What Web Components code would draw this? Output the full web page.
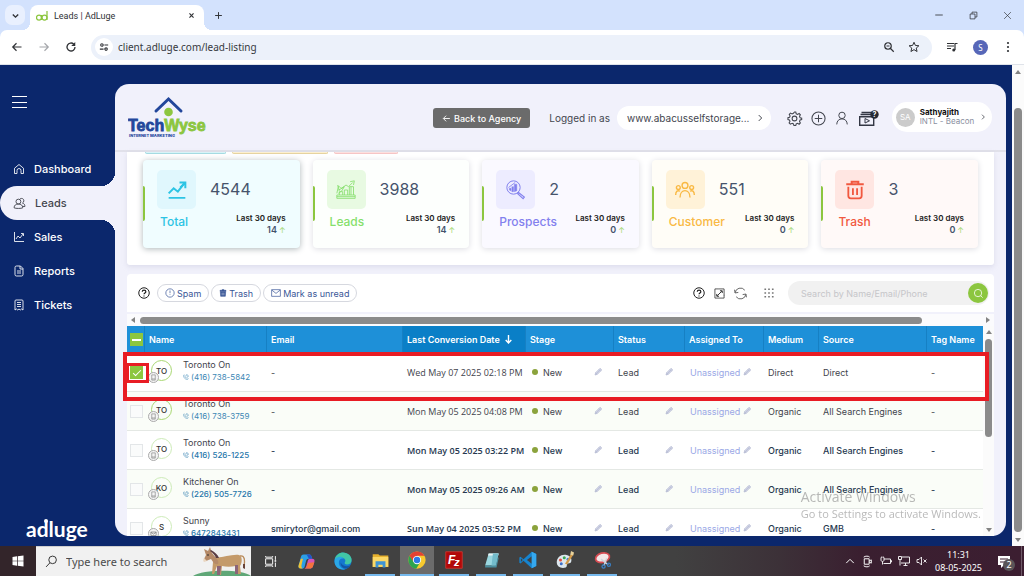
<!DOCTYPE html>
<html lang="en">
<head>
<meta charset="utf-8">
<title>Leads | AdLuge</title>
<style>
html, body { margin: 0; height: 100%; }
body {
  min-height: 100vh; display: flex; flex-direction: column; overflow: hidden;
  font-family: Inter, "Liberation Sans", sans-serif; font-size: 9px; color: #40444e;
  --navy: #0b276c; --panel: #f1f1fb; --green: #8cc63f; --sys: "Noto Sans", "Open Sans", sans-serif;
}
</style>
</head>
<body>
<browser-bar></browser-bar>
<lead-app></lead-app>
<task-bar></task-bar>
<activation-note></activation-note>

<script>
const ICONS = {
  down: '<path d="M7 10l5 5 5-5" stroke-width="2.6"/>',
  close: '<path d="M5 5l14 14M19 5L5 19" stroke-width="4"/>',
  thinclose: '<path d="M3 3l18 18M21 3L3 21" stroke-width="1.8"/>',
  plus: '<path d="M12 3v18M3 12h18" stroke-width="2.6"/>',
  minus: '<path d="M3 12h18" stroke-width="2"/>',
  restore: '<path d="M3 8h13v13H3zM8 8V3h13v13h-5" stroke-width="2"/>',
  back: '<path d="M21 12H4M11 4.5L3.500 12l7.500 7.500" stroke-width="2.4"/>',
  forward: '<path d="M3 12h17M13 4.500l7.500 7.500-7.500 7.500" stroke-width="2.400"/>',
  reload: '<path d="M20 12a8 8 0 1 1-2.500-5.800" stroke-width="2.600"/><path d="M20.500 2v8h-8z" fill="currentColor" stroke="none"/>',
  tune: '<circle cx="7" cy="7" r="3" stroke-width="2.600"/><circle cx="17" cy="17" r="3" stroke-width="2.600"/><path d="M13 7h9M2 17h9" stroke-width="2.600"/>',
  zoomout: '<circle cx="10" cy="10" r="6.500" stroke-width="2.400"/><path d="M15 15l6.500 6.500M7 10h6" stroke-width="2.400"/>',
  star: '<path d="M12 2.500l2.800 6.400 7 .6-5.300 4.600 1.600 6.900L12 17.300 5.900 21l1.600-6.900-5.300-4.600 7-.6z" stroke-width="2"/>',
  media: '<path d="M2 5h14M2 10h14M2 15h8" stroke-width="2.400"/><path d="M18 18V5h5" stroke-width="2.400"/><circle cx="15.500" cy="18" r="3" fill="currentColor" stroke="none"/>',
  dots: '<g fill="currentColor" stroke="none"><circle cx="12" cy="4" r="2.200"/><circle cx="12" cy="12" r="2.200"/><circle cx="12" cy="20" r="2.200"/></g>',
  home: '<path d="M3 10.500L12 3l9 7.500V21h-5v-6a4 4 0 0 0-8 0v6H3z"/>',
  people: '<circle cx="10" cy="8.500" r="4.500"/><path d="M2 20c0-5 3.500-7 8-7s8 2 8 7c-3 1.500-13 1.500-16 0zM12 4.500C14 1.500 20 2 20 7c0 2-1 3.500-2.500 4.200 3 .8 4.500 3 4.500 6.300h-4"/>',
  chart: '<path d="M3 2v19h19M6 16l4-6 4 4 6-8M16 5h5v5"/>',
  report: '<path d="M4 5a3 3 0 0 1 3-3h8l5 5v12a3 3 0 0 1-3 3H7a3 3 0 0 1-3-3zM14 2v6h6M8 12h8M8 16h8"/>',
  ticket: '<path d="M4 22V4a2 2 0 0 1 2-2h12a2 2 0 0 1 2 2v18l-3-2-2.500 2L12 20l-2.500 2L7 20zM8 7h8M8 11h8M8 15h8"/>',
  gear: '<circle cx="12" cy="12" r="3.800"/><path d="M12 1.500l2 .2.700 2.700 2.200 1 2.500-1.400 2 2-1.400 2.500 1 2.200 2.500.7v2.400l-2.600.7-.9 2.200 1.400 2.500-2 2-2.500-1.400-2.200 1-.7 2.500h-2.900l-.7-2.500-2.200-1L5.400 21l-2-2 1.400-2.500-1-2.200L1.500 13.600v-2.800l2.600-.7.900-2.200L3.600 5.300l2-2 2.500 1.400 2.200-1z"/>',
  addcircle: '<circle cx="12" cy="12" r="10.500"/><path d="M12 6v12M6 12h12"/>',
  user: '<circle cx="12" cy="7.500" r="5.500"/><path d="M3 23c0-6 4-9.500 9-9.500s9 3.500 9 9.500"/>',
  right: '<path d="M9 5l7 7-7 7" stroke-width="2.400"/>',
  help: '<circle cx="12" cy="12" r="10.500" stroke-width="2"/><path d="M8.500 9.500c.2-4.500 7.200-4.300 7.200 0 0 2.500-3.600 2.500-3.600 5M12 17v2.200" stroke-width="2.400"/>',
  spam: '<circle cx="12" cy="12" r="10"/><path d="M12 6v6M12 14v2"/>',
  trashfill: '<path d="M4 8h16l-1 14H5zM3 4h18v3H3zM9 2h6v2H9z" fill="currentColor"/><path d="M9 11v8M12 11v8M15 11v8" stroke="#fff" stroke-width="1"/>',
  mail: '<path d="M1.500 4h21v16h-21zM2 5l10 8 10-8"/>',
  expand: '<path d="M9 2H2v20h20v-7M22 2H9M22 2v14" stroke-width="1.600"/><path d="M17 7L7 17M13 6h5v5M6 13v5h5" stroke-width="2"/>',
  refresh: '<path d="M2 11a10 10 0 0 1 18-5M22 13a10 10 0 0 1-18 5M1 5l1 6 6-1M23 19l-1-6-6 1" stroke-width="1.800"/>',
  apps: '<g fill="currentColor" stroke="none"><path d="M1 1h4v4H1zM10 1h4v4h-4zM19 1h4v4h-4zM1 10h4v4H1zM10 10h4v4h-4zM19 10h4v4h-4zM1 19h4v4H1zM10 19h4v4h-4zM19 19h4v4h-4z"/></g>',
  search: '<circle cx="11" cy="11" r="8"/><path d="M17 17l4 4"/>',
  pencil: '<path d="M3 21l2-7L17 2c3-1 6 2 5 5L10 19z" fill="#d3d7e8" stroke="#aab1cc" stroke-width="2"/><path d="M5 14l5 5M15 5l5 5M8 16l9-9" stroke="#aab1cc" stroke-width="1.500"/>',
  phone: '<path d="M5 3L2 6c0 9 7 16 16 16l3-4-5-4-3 2c-2-1-4-3-5-5l2-3zM13 2c5 0 9 4 9 9M13 6c3 0 5 2 5 5" stroke-width="2"/>',
  mobile: '<path d="M6 3h12v18H6zM6 17h12" stroke-width="2"/>',
  mailopen: '<path d="M3 7h18v12H3zM3 8l9 6 9-6" stroke-width="2.400"/>',
  growth: '<path d="M2 21.500h20" stroke-width="2"/><path d="M2 16l6-6 5 4 7-9" stroke-width="2.400"/><path d="M15 3h7v7M16 9l5-5" stroke-width="2.400"/>',
  bars: '<g stroke-width="1"><path d="M1 22h22v-4H1zM4 18v-4h4v4M10 18v-6h4v6M16 18V8h5v10M1 16l2-9 3 3 4-2-3 5-4 3M8 9l4-3 3 2 5-5M17 2l5-1-1 5M2 6l2 7M3 12l6-3"/><path d="M1 20h22M18 8v10"/></g>',
  lens: '<circle cx="9" cy="9" r="8" stroke-width="1.200"/><path d="M15 15l7 5.500-1.500 2L14 16.500z" stroke-width="1.400"/><path d="M4 12v-2h2v3zM7 14V8h2v6zM10 14V5h3v8z" fill="currentColor" stroke-width=".5"/><path d="M3 9l8-6" stroke-width="1"/>',
  group: '<g stroke-width="1.700"><circle cx="12" cy="6.500" r="3.500"/><circle cx="4" cy="9" r="2.300"/><circle cx="20" cy="9" r="2.300"/><path d="M6 21c0-11 12-11 12 0M.8 18c0-5 2.500-6 5.200-4.500M23.200 18c0-5-2.500-6-5.200-4.500"/></g>',
  bin: '<path d="M1.500 5h21M8 5V2h8v3" stroke-width="2.400"/><path d="M4 8v11c0 2 1 3 3 3h10c2 0 3-1 3-3V8M9.500 10v8M14.500 10v8" stroke-width="2.200"/>',
  win: '<path d="M1 4l9-1.300V11.300H1zM11.500 2.500L23 1v10.300H11.500zM1 12.700h9v8.600L1 20zM11.500 12.700H23V23l-11.500-1.500z" fill="currentColor" stroke="none"/>',
  find: '<circle cx="14" cy="9" r="7" stroke-width="1.800"/><path d="M9 14.500L2 22" stroke-width="1.800"/>',
  taskview: '<path d="M3 7h13v10H3zM3 2v2h13V2M3 22v-2h13v2M21 2v7M21 14v8" stroke-width="1.800"/><path d="M19.500 9.500h3v3h-3z" fill="currentColor" stroke="none"/>',
  caretup: '<path d="M3 17l9-9 9 9" stroke-width="2.400"/>',
  meet: '<path d="M6 7h9v10H6zM15 11l4-2v6l-4-2M5 4c3-2.500 9-2.500 11 0M5 20c3 2.500 9 2.500 11 0" stroke-width="1.800"/>',
  battery: '<path d="M8 8h13v9H7M21 11h2v3h-2M2 5v5c0 4 6 4 6 0V5M3.500 3v3M6.500 3v3M5 13v6" stroke-width="1.800"/>',
  network: '<path d="M8 4h15v12H6M11 21h8M15 16v5M1 3h6v6H1zM4 9v12" stroke-width="1.800"/>',
  mute: '<path d="M2 9h4l5-5v16l-5-5H2zM15 9l6 6M21 9l-6 6" stroke-width="1.700"/>',
  copilot: '<g stroke="none"><path d="M8 2h8c2 0 2.500 1 3 3l1 3h-5c-2 0-3 1-3.600 3l-2 8c-.6 2-1.400 3-3.400 3H4c-3 0-4-2-3-5l3-11c.7-3 2-4 4-4z" fill="#2c9fe6"/><path d="M4 8l3 0-2 9c-.5 2 0 4 2 5H4c-3 0-4-2-3-5z" fill="#f2c230"/><path d="M16 22H8c2 0 3-1 3.600-3l2.600-9c.6-1.500 1.800-2 3.800-2h2c3 0 4 2 3 5l-2 6c-.8 2-2 3-5 3z" fill="#d453b8"/><path d="M14 14l9-1-2 6c-.8 2-2 3-5 3H9c3-1 4-4 5-8z" fill="#f5743c"/><path d="M11 2h5c2 0 2.500 1 3 3l1 3h-4c-2-1-2-5-5-6z" fill="#2553c8"/></g>',
  edge: '<g stroke="none"><circle cx="12" cy="12" r="11.500" fill="#1477d0"/><path d="M1 10C2 4 7 .5 12 .5c7 0 11.500 5 11.500 10 0 4-3 6-6 6-3 0-4-1.500-3-3 2-3-1-6-4-6C6 7.500 3 9 1 10z" fill="#41c6a6"/><path d="M1 10c3-4 9-5 12-1-4-1-7 2-6.500 6 .5 4 4 7.500 8.500 8C7 25-1 19 1 10z" fill="#2ba7e6"/><path d="M9 14c-1 4 3 8 7 8 2 0 5-2 6-4-5 2-11 1-13-4z" fill="#1356a5"/></g>',
  folder: '<g stroke="none"><path d="M1 3h8l2 2h12v16H1z" fill="#e6b02d"/><path d="M1 7h22v14H1z" fill="#fbd866"/><path d="M5 13h14v9h-4v-4H9v4H5z" fill="#3f94d4"/></g>',
  chrome: '<g stroke="none"><circle cx="12" cy="12" r="11.500" fill="#f7c92e"/><path d="M2 6.300C4 2.500 8 .5 12 .5s8 2 10 5.700H12L7 15z" fill="#e34133"/><path d="M2 6.300C-2 13 2.500 23 11 23.500L16.800 14H7z" fill="#2da44e"/><circle cx="12" cy="12" r="5.500" fill="#fff"/><circle cx="12" cy="12" r="4.300" fill="#2d79e6"/></g>',
  filezilla: '<path d="M1 1h22v22H1z" fill="#b20808" stroke="#d53a32" stroke-width="1"/><text x="4" y="17" font-family="Liberation Sans" font-size="16" font-style="italic" font-weight="700" fill="#fff" stroke="none">F</text><text x="12" y="20" font-family="Liberation Sans" font-size="15" font-style="italic" font-weight="700" fill="#fff" stroke="none">z</text>',
  notepad: '<g stroke="none"><path d="M8 2h14l-4 17H3z" fill="#9ad7e0"/><path d="M8 2h14l-.6 3H7z" fill="#e9f4f5"/><path d="M3 19h15l3-13 1 3-3 13H3z" fill="#4a8f9f"/><path d="M14 2h8l-4 17h-6z" fill="#73bccb"/></g>',
  vscode: '<g stroke="none"><path d="M17 1l6 3v16l-6 3L6 13 2 16.500.5 15.500v-7L2 7.500 6 11z" fill="#1684cf"/><path d="M17 7v10l-6.500-5z" fill="#414141"/><path d="M2.500 9.500v5L5 12z" fill="#414141"/><path d="M17 1l6 3v16l-6 3z" fill="#35a8ef"/></g>',
  paint: '<g stroke="none"><path d="M1 15C1 8 7 4 13 5c6 1 9 5 7 10-1 2-4 1-5 2-1 2 0 4-2 5-6 2-12-1-12-7z" fill="#dde7ee"/><circle cx="6" cy="12" r="2" fill="#e34d3b"/><circle cx="11" cy="9" r="2" fill="#39a652"/><circle cx="16" cy="11" r="2" fill="#3a7fd4"/><circle cx="7" cy="17" r="2" fill="#3d6fc9"/><path d="M12 17L20 4l3 1-8 13z" fill="#d39a4a"/><path d="M19 5l1-5 4 2-1 4z" fill="#e9d29a"/></g>',
  snip: '<ellipse cx="12" cy="8" rx="10" ry="6.500" fill="#f3e6e7" stroke="#d64b52" stroke-width="2.500" transform="rotate(-15 12 8)"/><path d="M10 10l10 8M18 9l-4 10" stroke="#cfd6de" stroke-width="2"/><circle cx="21" cy="18" r="2.200" stroke="#3b80c6" stroke-width="1.800"/><circle cx="13.500" cy="20.500" r="2.200" stroke="#3b80c6" stroke-width="1.800"/>'
};

function define(name, html, after) {
  const t = document.createElement('template');
  t.innerHTML = html;
  customElements.define(name, class extends HTMLElement {
    constructor() { super(); this.attachShadow({ mode: 'open' }).append(t.content.cloneNode(true)); }
    connectedCallback() { if (after) after.call(this, this.shadowRoot); }
  });
}

/* One drawing from the icon set; "size" is its edge in pixels. */
define('ui-icon', `<style>:host{display:block;flex:none}svg{display:block;fill:none;stroke:currentColor;stroke-width:1.7;overflow:visible}</style>
<svg viewBox="0 0 24 24" aria-hidden="true"></svg>`, function (r) {
  const s = r.querySelector('svg'), n = this.getAttribute('size') || 12;
  s.setAttribute('width', n); s.setAttribute('height', n);
  s.innerHTML = ICONS[this.getAttribute('name')] || '';
});

const BTN = 'button{font:inherit;color:inherit;border:0;background:none;padding:0;margin:0;display:flex;align-items:center;justify-content:center}';

define('browser-bar', `<style>
:host{display:block;font-family:var(--sys);font-size:9px;color:#303236;background:#d3e2fd}
${BTN}
.tabs{height:30px;display:flex;align-items:center}
.list{width:20px;height:20px;border-radius:7px;background:#e9f0fe;margin:0 5px}
.tab{box-sizing:border-box;align-self:flex-end;height:25px;width:174px;background:#fff;border-radius:8px 8px 0 0;display:flex;align-items:center;gap:6px;padding:0 9px 4px 6px;position:relative}
.tab::before,.tab::after{content:"";position:absolute;bottom:0;width:8px;height:8px}
.tab::before{left:-8px;background:radial-gradient(circle at 0 0,#0000 8px,#fff 8px)}
.tab::after{right:-8px;background:radial-gradient(circle at 100% 0,#0000 8px,#fff 8px)}
.tab span{flex:1;font-family:Roboto,sans-serif}
.new{margin-left:10px}
.win{margin-left:auto;display:flex}
.win button{width:34px;height:30px}
.tools{box-sizing:border-box;height:35px;background:#fff;border-radius:7px 7px 0 0;border-bottom:1px solid #dfe3ea;display:flex;align-items:center;gap:15px;padding:0 11px 0 11px}
.addr{flex:1;height:25px;border-radius:13px;background:#ecf1fa;display:flex;align-items:center;padding:0 12px 0 4px;margin:0 -1px}
.site{width:18px;height:18px;border-radius:9px;background:#fff;margin-right:5px}
input{flex:1;min-width:0;border:0;background:none;font:10px var(--sys);color:#36393e;padding:0;outline:0}
.addr button+button{margin-left:13px}
.me{width:15px;height:15px;border-radius:8px;background:#5767b8;color:#fff;font-size:8px}
.dots{margin:0 -1px}
.fwd{color:#a4a6aa}
</style>
<div class="tabs">
<button class="list" aria-label="Search tabs"><ui-icon name="down" size="13"></ui-icon></button>
<div class="tab"><svg width="12" height="12" viewBox="0 0 24 24" fill="none" stroke="#8cc63f" stroke-width="2.500"><circle cx="6" cy="15" r="5"/><circle cx="17" cy="15" r="5"/><path d="M22 2v18M11 10v10"/></svg><span>Leads | AdLuge</span><button aria-label="Close tab"><ui-icon name="close" size="7"></ui-icon></button></div>
<button class="new" aria-label="New tab"><ui-icon name="plus" size="9"></ui-icon></button>
<div class="win"><button aria-label="Minimize"><ui-icon name="minus" size="10"></ui-icon></button><button aria-label="Restore"><ui-icon name="restore" size="9"></ui-icon></button><button aria-label="Close"><ui-icon name="thinclose" size="9"></ui-icon></button></div>
</div>
<div class="tools">
<button aria-label="Back"><ui-icon name="back" size="12"></ui-icon></button>
<button class="fwd" aria-label="Forward"><ui-icon name="forward" size="12"></ui-icon></button>
<button aria-label="Reload"><ui-icon name="reload" size="12"></ui-icon></button>
<div class="addr"><button class="site" aria-label="Site information"><ui-icon name="tune" size="10"></ui-icon></button><input aria-label="Address" value="client.adluge.com/lead-listing"><button aria-label="Zoom"><ui-icon name="zoomout" size="12"></ui-icon></button><button aria-label="Bookmark"><ui-icon name="star" size="12"></ui-icon></button></div>
<button aria-label="Media"><ui-icon name="media" size="12"></ui-icon></button>
<button class="me" aria-label="Profile S">S</button>
<button class="dots" aria-label="Menu"><ui-icon name="dots" size="12"></ui-icon></button>
</div>`);

/* A drawn scroll bar: a track with two arrows and a thumb sized in percent. */
define('scroll-track', `<style>
:host{display:flex;align-items:center;background:#fbfbfd;gap:var(--gap,3px)}
:host([vertical]){flex-direction:column}
.t{flex:1;display:flex;align-self:stretch}
:host([vertical]) .t{flex-direction:column;padding:var(--pad,0)}
i{display:block;background:#8b8b8b;border-radius:4px;flex:0 0 var(--thumb);margin:3px 0 2px}
:host([vertical]) i{margin:0 2px}
b{width:0;height:0;border:3px solid #0000;flex:none}
:host([vertical]) .a{border-bottom:4px solid #838383;border-top:0}
:host([vertical]) .z{border-top:4px solid #838383;border-bottom:0}
:host(:not([vertical])) .a{border-right:4px solid #838383;border-left:0}
:host(:not([vertical])) .z{border-left:4px solid #838383;border-right:0}
</style><b class="a"></b><div class="t"><i></i></div><b class="z"></b>`);

define('lead-app', `<style>
:host{flex:1;min-height:0;display:flex;background:var(--navy)}
main{flex:1;min-width:0;display:flex;flex-direction:column;margin:19px 6px 10px 0;background:var(--panel);border-radius:14px;overflow:hidden}
.body{flex:1;min-height:0;padding:0 12px;display:flex;flex-direction:column;gap:9px}
leads-panel{flex:1;min-height:0}
scroll-track{width:12px;box-sizing:border-box;padding:5px 0 4px;background:#fbfbfb;--gap:0px;--thumb:100%;--pad:34px 0 6px}
</style>
<side-nav></side-nav>
<main><app-header></app-header><div class="body"><stat-cards></stat-cards><leads-panel></leads-panel></div></main>
<scroll-track vertical></scroll-track>`);

define('side-nav', `<style>
:host{width:115px;flex:none;display:flex;flex-direction:column;color:#fff;font-size:11px;font-weight:500}
${BTN}
.menu{margin:31px 0 0 12px;width:15px;height:12px;border-top:1px solid #fff;border-bottom:1px solid #fff}
.menu span{width:15px;height:1px;background:#fff}
nav{margin-top:44px;display:flex;flex-direction:column}
a{height:34px;display:flex;align-items:center;gap:9px;padding-left:13px;color:#fff;text-decoration:none}
a[aria-current]{background:var(--panel);color:#43454d;border-radius:17px 0 0 17px;position:relative}
a[aria-current]::before,a[aria-current]::after{content:"";position:absolute;right:0;width:14px;height:14px}
a[aria-current]::before{bottom:100%;background:radial-gradient(circle at 0 0,#0000 14px,var(--panel) 14px)}
a[aria-current]::after{top:100%;background:radial-gradient(circle at 0 100%,#0000 14px,var(--panel) 14px)}
.brand{margin:auto 0 0 26px;display:block}
</style>
<button class="menu" aria-label="Toggle menu"><span></span></button>
<nav>
<a href="#dashboard"><ui-icon name="home" size="12"></ui-icon>Dashboard</a>
<a href="#leads" aria-current="page"><ui-icon name="people" size="13"></ui-icon>Leads</a>
<a href="#sales"><ui-icon name="chart" size="12"></ui-icon>Sales</a>
<a href="#reports"><ui-icon name="report" size="12"></ui-icon>Reports</a>
<a href="#tickets"><ui-icon name="ticket" size="12"></ui-icon>Tickets</a>
</nav>
<svg class="brand" width="66" height="30" viewBox="0 0 66 30"><text x="0" y="21" font-family="Lato" font-weight="700" font-size="21" fill="#fff">adluge</text><circle cx="20" cy="5" r="2" fill="#fff"/></svg>`);

define('app-header', `<style>
:host{display:flex;align-items:center;height:64px;border-bottom:2px solid #e1e1ea;padding:2px 14px 0 13px;color:#43464f;font-size:10px}
${BTN}
.logo{margin-right:auto;display:block}
.back{height:20px;padding:0 9px;gap:3px;border-radius:3px;background:#6b6b6b;color:#fff;font-size:9px;font-weight:500}
.as{margin:0 7px 0 19px}
.site{height:24px;box-sizing:border-box;padding:0 9px 0 10px;gap:5px;border-radius:12px;background:#fff;width:154px;justify-content:space-between}
.icons{display:flex;gap:9px;margin:0 13px 0 16px}
.clip{display:block}
.who{box-sizing:border-box;width:100px;height:30px;border-radius:15px;background:#fff;padding:0 7px 0 6px;text-align:left;gap:5px;margin-top:-2px}
.av{width:19px;height:19px;border-radius:10px;background:#cbcbcb;color:#fff;display:grid;place-items:center;font-size:8px;flex:none}
.n{flex:1;font-size:8px;line-height:9px;color:#8a8fa0;white-space:nowrap}
.n b{display:block;color:#111;font-weight:700}
</style>
<svg class="logo" width="82" height="44" viewBox="0 0 82 44"><path d="M28 15L40.500 3 53 15" fill="none" stroke="#23479b" stroke-width="3" stroke-linecap="round"/><circle cx="40.500" cy="16" r="4.300" fill="#8cc63f"/><text y="35" font-family="Liberation Sans" font-weight="700" font-size="16"><tspan fill="#23479b" stroke="#23479b" stroke-width=".8">Tech</tspan><tspan fill="#8cc63f" stroke="#8cc63f" stroke-width=".8">Wyse</tspan></text><text x="1" y="41" font-family="Inter" font-weight="800" font-size="4" fill="#23479b">INTERNET MARKETING</text></svg>
<button class="back"><ui-icon name="back" size="9"></ui-icon>Back to Agency</button>
<span class="as">Logged in as</span>
<button class="site"><span>www.abacusselfstorage...</span><ui-icon name="right" size="10"></ui-icon></button>
<div class="icons">
<button aria-label="Settings"><ui-icon name="gear" size="15"></ui-icon></button>
<button aria-label="Add"><ui-icon name="addcircle" size="15"></ui-icon></button>
<button aria-label="Account"><ui-icon name="user" size="14"></ui-icon></button>
<button aria-label="Tutorials"><svg class="clip" width="21" height="16" viewBox="0 0 21 16" fill="none" stroke="#333744"><path d="M3.500 2.500h12M2.500 4.500h14" stroke-width="1.500"/><path d="M1.700 6.700h14v8.500h-14z" stroke-width="1.400"/><path d="M7 8.500l4.500 2.300L7 13z"/><circle cx="16.500" cy="4.500" r="4.200" fill="#262a33" stroke="none"/><text x="14.500" y="7" font-family="Inter" font-size="7" font-weight="700" fill="#fff" stroke="none">?</text></svg></button>
</div>
<button class="who"><span class="av">SA</span><span class="n"><b>Sathyajith</b>INTL - Beacon</span><ui-icon name="right" size="8"></ui-icon></button>`);

define('stat-cards', `<style>
:host{display:block;background:#fff;border-radius:0 0 3px 3px;box-shadow:0 2px 5px #bdbdd466}
.chips{display:flex;gap:6px;padding-left:18px;height:2px}
.chips i{box-sizing:border-box;height:2px;border:1px solid;border-top:0;border-radius:0 0 3px 3px}
.chips i:nth-child(1){width:81px;background:#d8f4f8;border-color:#a5dbe2}
.chips i:nth-child(2){width:96px;background:#fdf0d0;border-color:#e6d3a0}
.chips i:nth-child(3){width:64px;background:#fde0df;border-color:#f6c5c5}
.grid{display:grid;grid-template-columns:repeat(5,1fr);gap:13px;padding:6px 16px 17px}
</style>
<div class="chips"><i></i><i></i><i></i></div>
<div class="grid">
<stat-card icon="growth" style="--c:#2cc4e4;--box:#e0f7fd;--bg:#f0fdff;--sh:#aeb6b8"><span slot="n">4544</span><span slot="l">Total</span><span slot="v">14</span></stat-card>
<stat-card icon="bars" style="--c:#86df6c;--box:#e8fae2;--bg:#fdfffd"><span slot="n">3988</span><span slot="l">Leads</span><span slot="v">14</span></stat-card>
<stat-card icon="lens" style="--c:#8280ee;--box:#edecff;--bg:#faf9ff"><span slot="n">2</span><span slot="l">Prospects</span><span slot="v">0</span></stat-card>
<stat-card icon="group" style="--c:#f9b944;--box:#fff2d8;--bg:#fffdf7"><span slot="n">551</span><span slot="l">Customer</span><span slot="v">0</span></stat-card>
<stat-card icon="bin" style="--c:#f1583f;--box:#ffe6e2;--bg:#fff9f8"><span slot="n">3</span><span slot="l">Trash</span><span slot="v">0</span></stat-card>
</div>`);

define('stat-card', `<style>
:host{box-sizing:border-box;height:88px;border-radius:4px;background:var(--bg);box-shadow:0 1px 6px var(--sh,#dcdce2);padding:10px 14px 0 0;display:grid;grid-template-columns:2px 1fr auto;grid-template-rows:39px auto;white-space:nowrap}
.bar{grid-row:1/3;height:35px;margin-top:16px;background:var(--green);border-radius:0 2px 2px 0}
.top{grid-column:2/4;display:flex;align-items:center;gap:14px;padding-left:12px}
.box{width:39px;height:39px;border-radius:5px;background:var(--box);color:var(--c);display:grid;place-items:center}
.num{font-size:16px;line-height:20px;padding-bottom:2px;color:#46536b}
.label{font-size:12px;line-height:16px;font-weight:500;color:var(--c);padding:5px 0 0 15px}
.last{text-align:right;line-height:12px;font-size:8px;font-weight:600;color:#222;padding-top:3px}
.last div{color:#43526b;font-size:9px}
em{font-style:normal;font-weight:400;color:#a5d876;font-size:8px;margin-left:2px}
</style>
<i class="bar"></i>
<div class="top"><div class="box"><ui-icon size="20"></ui-icon></div><span class="num"><slot name="n"></slot></span></div>
<div class="label"><slot name="l"></slot></div>
<div class="last">Last 30 days<div><slot name="v"></slot><em>↑</em></div></div>`, function (r) {
  const i = r.querySelector('ui-icon'); i.setAttribute('name', this.getAttribute('icon')); i.replaceWith(i.cloneNode());
});

define('leads-panel', `<style>
:host{display:flex;flex-direction:column;background:#fff;border-radius:4px 4px 0 0}
${BTN}
.bar{height:38px;display:flex;align-items:center;padding:0 5px 0 11px;border-bottom:2px solid var(--panel);color:#222}
.pill{box-sizing:border-box;height:18px;border:1px solid #d6d8df;border-radius:9px;color:#3a5797;font-size:9px;padding:0 7px;gap:2px;margin-right:2px;white-space:nowrap}
.help{margin-right:7px}
.tools{margin-left:auto;display:flex;align-items:center;gap:9px;margin-right:14px}
.tools .g{color:#777;margin-left:8px}
form{box-sizing:border-box;width:201px;height:24px;border-radius:12px;background:#f1f1f1;display:flex;align-items:center;padding:0 1px 0 13px}
input{flex:1;min-width:0;border:0;background:none;outline:0;font:9px Inter,sans-serif;padding:0}
input::placeholder{color:#c6c6c9;opacity:1}
form button{width:20px;height:20px;border-radius:10px;background:var(--green);color:#fff}
scroll-track.h{height:12px;padding:0 4px;--gap:5px;--thumb:93%}
.wrap{display:flex;position:relative;flex:1;min-height:0}
leads-table{flex:1;min-width:0}
scroll-track.v{width:11px;box-sizing:border-box;padding:4px 0;--thumb:53%;--gap:5px;background:#fbfbfb}
.mark{position:absolute;box-sizing:border-box;border:4px solid #e81c24;inset:26px 5px auto -4px;height:49px}
.mark.s{border-width:3px;inset:37px auto auto -1px;width:23px;height:20px}
</style>
<div class="bar">
<button class="help" aria-label="Help"><ui-icon name="help" size="12"></ui-icon></button>
<button class="pill"><ui-icon name="spam" size="10"></ui-icon>Spam</button>
<button class="pill"><ui-icon name="trashfill" size="8"></ui-icon>Trash</button>
<button class="pill"><ui-icon name="mail" size="10"></ui-icon>Mark as unread</button>
<div class="tools">
<button aria-label="Help"><ui-icon name="help" size="12"></ui-icon></button>
<button aria-label="Expand"><ui-icon name="expand" size="11"></ui-icon></button>
<button aria-label="Refresh" style="color:#666"><ui-icon name="refresh" size="13"></ui-icon></button>
<button class="g" aria-label="Columns"><ui-icon name="apps" size="10"></ui-icon></button>
</div>
<form><input aria-label="Search leads" placeholder="Search by Name/Email/Phone"><button type="button" aria-label="Search"><ui-icon name="search" size="11"></ui-icon></button></form>
</div>
<scroll-track class="h"></scroll-track>
<div class="wrap"><leads-table></leads-table><scroll-track class="v" vertical></scroll-track><div class="mark"></div><div class="mark s"></div></div>`);

const LEADS = [
  ['TO', 'Toronto On', '(416) 738-5842', '-', 'Wed May 07 2025 02:18 PM', 'Direct', 'Direct', 'read'],
  ['TO', 'Toronto On', '(416) 738-3759', '-', 'Mon May 05 2025 04:08 PM', 'Organic', 'All Search Engines', 'read'],
  ['TO', 'Toronto On', '(416) 526-1225', '-', 'Mon May 05 2025 03:22 PM', 'Organic', 'All Search Engines', ''],
  ['KO', 'Kitchener On', '(226) 505-7726', '-', 'Mon May 05 2025 09:26 AM', 'Organic', 'All Search Engines', ''],
  ['S', 'Sunny', '6472843431', 'smirytor@gmail.com', 'Sun May 04 2025 03:52 PM', 'Organic', 'GMB', '']
];

define('leads-table', `<style>
:host{display:block;overflow:hidden}
${BTN}
table{width:100%;table-layout:fixed;border-collapse:separate;border-spacing:0;white-space:nowrap}
th,td{box-sizing:border-box;padding:0 0 0 4px;text-align:left}
th{height:27px;background:#1e90d8;color:#fff;font-weight:600;border-right:1px solid #1680c4}
th.sort{background:#0a7fc7}
th button{font-weight:600;gap:5px}
th:last-child{border-right:0}
th:first-child,td:first-child{padding-left:3px}
td{height:39px;border-bottom:1px solid #e4e8e4;color:#3f434c}
tr:nth-child(even) td{background:#fafdf8}
tr.new td{font-weight:500;color:#26384f}
td.date{font-family:"Open Sans",sans-serif}
tr.new td.date{font-weight:600}
input{appearance:none;box-sizing:border-box;display:block;width:13px;height:13px;margin:0;border:1px solid #e3e6e8;background:#fafbfb}
input:checked,input.some{border:0;background:var(--green)}
input.some::before{content:"";display:block;width:9px;height:2px;background:#fff;margin:6px 2px}
input:checked::before{content:"";display:block;width:7px;height:3px;border:solid #fff;border-width:0 0 1px 1px;rotate:-45deg;margin:4px 3px}
.lead{display:flex;align-items:center;gap:11px;padding-left:2px;margin-top:-3px}
.av{box-sizing:border-box;width:21px;height:21px;border-radius:11px;border:1px solid #a9d873;display:grid;place-items:center;position:relative;font-size:8px;font-weight:500;color:#333;line-height:1}
.new .av{border-color:#cdebb8}
.badge{position:absolute;left:-4px;top:11px;width:9px;height:9px;border:1px solid #aaa;border-radius:6px;background:#f4f4f4;display:grid;place-items:center;color:#777}
.who{line-height:12px;font-weight:400;color:#3f434c}
a{display:flex;align-items:center;gap:2px;color:#3d87b5;text-decoration:none;font-size:8px}
.new a{color:#2576aa;font-weight:500}
.f{display:flex;align-items:center;justify-content:space-between;padding-right:12px}
.f.stage{padding-left:2px}
.dot{width:6px;height:6px;border-radius:3px;background:#8ba33c;margin-right:5px}
.f span{flex:1}
.un{display:flex;align-items:center;gap:3px;padding-left:1px;color:#9aa8e6;font-weight:400}
</style>
<table>
<colgroup><col style="width:18px"><col style="width:122px"><col><col style="width:123px"><col style="width:88px"><col style="width:71px"><col style="width:79px"><col style="width:55px"><col style="width:108px"><col style="width:56px"></colgroup>
<thead><tr><th><input type="checkbox" class="some" aria-label="Select all"></th><th>Name</th><th>Email</th><th class="sort"><button>Last Conversion Date <svg width="7" height="9" viewBox="0 0 7 9" fill="none" stroke="#fff" stroke-width="1.400"><path d="M3.500 0v8M.7 5l2.800 3 2.800-3"/></svg></button></th><th>Stage</th><th>Status</th><th>Assigned To</th><th>Medium</th><th>Source</th><th>Tag Name</th></tr></thead>
<tbody></tbody></table>`, function (r) {
  const pen = '<button aria-label="Edit"><ui-icon name="pencil" size="8"></ui-icon></button>';
  r.querySelector('tbody').innerHTML = LEADS.map((l, i) => `<tr class="${l[7] || 'new'}"><td><input type="checkbox" aria-label="Select ${l[1]}"${i ? '' : ' checked'}></td>
<td><div class="lead"><div class="av">${l[0]}<span class="badge"><ui-icon name="${i === 4 ? 'mailopen' : 'mobile'}" size="7"></ui-icon></span></div><div class="who">${l[1]}<a href="tel:${l[2].replace(/\D/g, '')}"><ui-icon name="phone" size="6"></ui-icon>${l[2]}</a></div></div></td>
<td>${l[3]}</td><td class="date">${l[4]}</td><td><div class="f stage"><i class="dot"></i><span>New</span>${pen}</div></td><td><div class="f"><span>Lead</span>${pen}</div></td><td><div class="un">Unassigned${pen}</div></td><td>${l[5]}</td><td>${l[6]}</td><td>-</td></tr>`).join('');
});

define('task-bar', `<style>
:host{height:30px;flex:none;display:flex;align-items:center;background:linear-gradient(90deg,#33252a 0,#33252a 36px,#414141 252px,#414141 66%,#3c3138 76%,#3a1f30 84%,#3c1e31);color:#fff;font-family:var(--sys)}
${BTN}
button{height:30px}
.start{width:36px}
label{box-sizing:border-box;width:215px;height:30px;background:#f1f1f1;border-top:1px solid #cfcfcf;display:flex;align-items:center;color:#333;padding-left:9px;gap:8px;flex:none}
input{flex:1;min-width:0;border:0;background:none;outline:0;padding:0;font:11px "Noto Sans",sans-serif}
input::placeholder{color:#4b4b4b;opacity:1}
.pet{align-self:flex-end;display:block;flex:none}
.tv{width:38px}
.app{width:34px;margin-right:3px;box-sizing:border-box}
.run{background:linear-gradient(#76b9ed,#76b9ed) center bottom/30px 2px no-repeat;padding-bottom:2px}
.on{background-color:#6b6b6b;background-size:34px 2px}
.tray{margin-left:auto;display:flex;align-items:center;gap:6px}
.clock{font-size:9px;line-height:13px;text-align:center;margin:0 3px 0 1px}
.note{position:relative;width:26px}
.note b{position:absolute;left:12px;top:13px;width:12px;height:12px;border-radius:6px;background:#5a5558;font:9px/12px var(--sys);text-align:center}
.end{width:1px;height:30px;background:#6f5a68;margin-right:2px;margin-left:-2px}
</style>
<button class="start" aria-label="Start"><ui-icon name="win" size="12"></ui-icon></button>
<label><ui-icon name="find" size="13"></ui-icon><input aria-label="Search Windows" placeholder="Type here to search">
<svg class="pet" width="58" height="29" viewBox="0 0 58 29"><path d="M0 29C10 22 50 22 58 29z" fill="#5fa777"/><path d="M47 9c5-1 5 5 4 10" fill="none" stroke="#b98b5c" stroke-width="1.300"/><path d="M50 17l2 0 0 5-2-1z" fill="#6a4338"/><path d="M20 10c8 2 17-3 26-2 4 1 3 9 1 11l1 8h-3l-2-8c-5 1-10 1-14 0l-1 9h-3l-1-9-3 8h-2l1-12z" fill="#c49a6a"/><path d="M24 19h4l-1 9h-3zM42 18l3 0 0 9h-3z" fill="#8b6478"/><path d="M13 8l-2-6 4 2 2-4 2 6c3 4 8 8 6 11-4 1-6-4-7-5l-5 2-2-2z" fill="#b58a69"/><path d="M18 3c4 2 7 5 8 8l-3 0c-1-3-3-5-6-7z" fill="#5a3c42"/><path d="M11 11l3 3-3 1c-1-1-1-2 0-4z" fill="#ead6c0"/><circle cx="15" cy="8" r=".8" fill="#222"/></svg></label>
<button class="tv" aria-label="Task view"><ui-icon name="taskview" size="13"></ui-icon></button>
<button class="app" aria-label="Copilot"><ui-icon name="copilot" size="17"></ui-icon></button>
<button class="app" aria-label="Edge"><ui-icon name="edge" size="18"></ui-icon></button>
<button class="app run" aria-label="File Explorer"><ui-icon name="folder" size="17"></ui-icon></button>
<button class="app run on" aria-label="Chrome"><ui-icon name="chrome" size="18"></ui-icon></button>
<button class="app run" aria-label="FileZilla"><ui-icon name="filezilla" size="18"></ui-icon></button>
<button class="app run" aria-label="Notepad"><ui-icon name="notepad" size="17"></ui-icon></button>
<button class="app run" aria-label="VS Code"><ui-icon name="vscode" size="18"></ui-icon></button>
<button class="app run" aria-label="Paint"><ui-icon name="paint" size="18"></ui-icon></button>
<button class="app run" aria-label="Snipping Tool"><ui-icon name="snip" size="17"></ui-icon></button>
<div class="tray">
<button aria-label="Hidden icons"><ui-icon name="caretup" size="10"></ui-icon></button>
<button aria-label="Meet Now"><ui-icon name="meet" size="13"></ui-icon></button>
<button aria-label="Battery"><ui-icon name="battery" size="12"></ui-icon></button>
<button aria-label="Network"><ui-icon name="network" size="12"></ui-icon></button>
<button aria-label="Volume"><ui-icon name="mute" size="12"></ui-icon></button>
<div class="clock">11:31<br>08-05-2025</div>
<button class="note" aria-label="Notifications"><svg width="14" height="13" viewBox="0 0 14 13"><path d="M1 1h12v9H7l-3 3v-3H1z" fill="#fff"/><path d="M3 4h8M3 7h8" stroke="#3c1e31"/></svg><b>2</b></button>
<i class="end"></i></div>`);

define('activation-note', `<style>
:host{position:fixed;right:43px;bottom:55px;color:#8a8a8a99;font-family:"Open Sans",sans-serif;font-size:11px;line-height:14px;pointer-events:none}
b{display:block;font-size:14px;line-height:20px;font-weight:400}
</style><b>Activate Windows</b>Go to Settings to activate Windows.`);
</script>
</body>
</html>
